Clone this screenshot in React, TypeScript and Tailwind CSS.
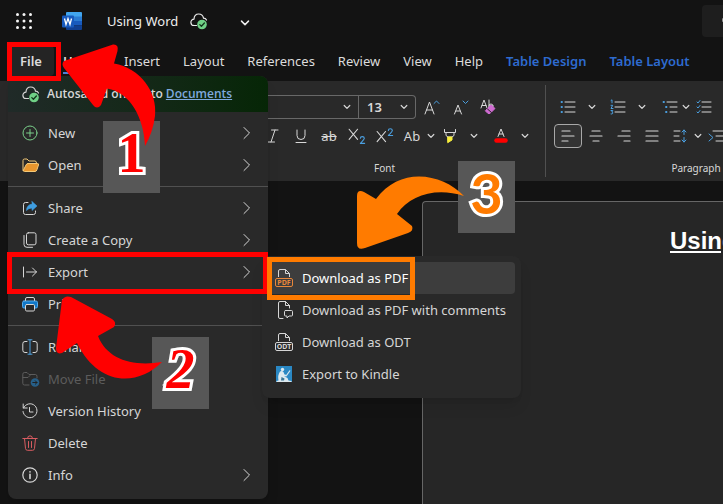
import type { ReactNode } from "react";

type IconProps = { children: ReactNode; className?: string; box?: string };

function Icon({ children, className = "size-4", box = "0 0 16 16" }: IconProps) {
  return (
    <svg
      viewBox={box}
      className={`shrink-0 ${className}`}
      fill="none"
      stroke="currentColor"
      strokeWidth="1"
      strokeLinecap="round"
      strokeLinejoin="round"
      aria-hidden="true"
    >
      {children}
    </svg>
  );
}

const ChevronDown = ({ className = "size-2" }: { className?: string }) => (
  <Icon box="0 0 8 8" className={className}>
    <path d="M1.2 2.5 4 5.3 6.8 2.5" strokeWidth="1.2" />
  </Icon>
);

const ChevronRight = () => (
  <Icon box="0 0 8 14" className="h-3.5 w-2">
    <path d="M1 1.500 6.500 7 1 12.500" />
  </Icon>
);

const CloudSaved = ({ className = "size-[18px]" }: { className?: string }) => (
  <Icon box="0 0 18 18" className={className}>
    <path d="M6.5 13.5H4.2A3.2 3.2 0 0 1 4 7.1C4.1 4.2 6 2 8.7 2c2.5 0 4.400 1.700 4.800 4.200 1.300 0 2.500.8 3 1.800" strokeWidth="1.2" />
    <circle cx="12" cy="12.500" r="4.800" fill="#6fd086" stroke="none" />
    <path d="m9.800 12.600 1.600 1.600 3-3.200" stroke="#13351c" strokeWidth="1.300" />
  </Icon>
);

const icons: Record<string, ReactNode> = {
  New: (
    <Icon className="size-4 text-[#7bd08b]">
      <circle cx="8" cy="8" r="7" />
      <path d="M8 4.500v7M4.500 8h7" />
    </Icon>
  ),
  Open: (
    <Icon className="h-4 w-[18px] text-[#f3c878]" box="0 0 18 16">
      <path d="M1 13.500V3.500Q1 2 2.500 2H5l2 2h6q1.500 0 1.500 2" />
      <path d="M6 6.500h9.500Q17 6.500 16.500 8L15 12.500Q14.500 14.500 13 14.500H2.500Q1 14.500 1.500 13L4 8Q4.500 6.500 6 6.500Z" fill="#e8962e" />
    </Icon>
  ),
  Share: (
    <Icon>
      <path d="M6 2.500H3.500Q1.500 2.500 1.500 4.500v8q0 2 2 2h8q2 0 2-2V11" />
      <path d="M10 1.500 15 6l-5 4.500V8Q6.500 8 4.500 10.500 4.500 5 10 4Z" fill="#3f9ee0" stroke="#3f9ee0" strokeWidth=".6" />
    </Icon>
  ),
  "Create a Copy": (
    <Icon>
      <rect x="4.500" y=".8" width="9.500" height="12" rx="1.800" />
      <path d="M2 3.500V12.500Q2 15.300 5 15.300h5.500" />
    </Icon>
  ),
  Export: (
    <Icon>
      <path d="M1.500 3v10M4.500 8h10M10.500 4l4 4-4 4" />
    </Icon>
  ),
  Print: (
    <Icon>
      <rect x=".5" y="5" width="15" height="7" rx="1.500" fill="#1178c8" stroke="#55a9e8" />
      <path d="M3.500 4.500V3Q3.500 1.500 5 1.500h6q1.500 0 1.500 1.500v1.500" />
      <rect x="3.500" y="8.500" width="9" height="6.500" rx="1.200" fill="#292929" />
    </Icon>
  ),
  Rename: (
    <Icon>
      <path d="M5 2.500H3Q.8 2.500.8 4.800v6.400Q.8 13.500 3 13.500h2M11 2.500h2q2.200 0 2.200 2.300v6.400q0 2.300-2.200 2.300h-2" />
      <path d="M8 .8v14.400M6 .8h4M6 15.200h4" stroke="#4ba0e1" />
    </Icon>
  ),
  "Move File": (
    <Icon className="h-4 w-[18px]" box="0 0 18 16">
      <path d="M7 14H2.500Q.8 14 .8 12.300V3.200Q.8 1.500 2.500 1.500H5l2 2h6.500q1.500 0 1.500 2V7M1 6.500h5l2-2" />
      <circle cx="13" cy="11.500" r="4.300" fill="#275f88" stroke="none" />
      <path d="M10.800 11.500h4.200M13.300 9.800l1.700 1.700-1.700 1.700" stroke="#202020" />
    </Icon>
  ),
  "Version History": (
    <Icon>
      <path d="M1.200 1v4h4M1.500 5A7 7 0 1 1 1 8.500M7.500 4.500V9H11" />
    </Icon>
  ),
  Delete: (
    <Icon className="size-4 text-[#d85c61]">
      <path d="M.8 3.500h14.400M5.500 3.500Q5.500.8 8 .8t2.500 2.700M2.500 3.500 3.500 13.500Q3.700 15.300 5.500 15.300h5q1.800 0 2-1.800l1-10M6.500 6.500v6M9.500 6.500v6" />
    </Icon>
  ),
  Info: (
    <Icon>
      <circle cx="8" cy="8" r="7.200" strokeWidth="1.200" />
      <path d="M8 7.300V11.500M8 4.700v.3" strokeWidth="1.600" />
    </Icon>
  ),
};

function MenuItem({ label, more, disabled }: { label: string; more?: boolean; disabled?: boolean }) {
  return (
    <button
      type="button"
      role="menuitem"
      disabled={disabled}
      className="flex h-8 w-full items-center pr-[17px] pl-3.5 text-left text-[#d6d6d6] disabled:text-[#5c5c5c]"
    >
      <span className="flex w-[26px] shrink-0">{icons[label]}</span>
      <span className="flex-1">{label}</span>
      {more && <ChevronRight />}
    </button>
  );
}

const Divider = () => <div role="separator" className="my-[5px] h-px bg-[#505050]" />;

function FileMenu() {
  return (
    <div role="menu" aria-label="File" className="absolute top-[76px] left-2 w-[260px] overflow-hidden rounded-lg bg-[#292929] pb-2 shadow-lg">
      <div className="mb-[5px] flex h-9 items-center bg-linear-to-r from-[#202a28] to-[#062606] pl-3.5 font-['Open_Sans','Noto_Sans',sans-serif] text-[12px] font-semibold text-[#d6d6d6]">
        <span className="flex w-[25px] shrink-0"><CloudSaved /></span>
        <p className="whitespace-nowrap">
          Autosaved online to{" "}
          <a href="#documents" className="text-[#7fa9dd] underline">Documents</a>
        </p>
      </div>
      <MenuItem label="New" more />
      <MenuItem label="Open" more />
      <Divider />
      <MenuItem label="Share" more />
      <MenuItem label="Create a Copy" more />
      <MenuItem label="Export" more />
      <MenuItem label="Print" />
      <Divider />
      <MenuItem label="Rename" />
      <MenuItem label="Move File" disabled />
      <MenuItem label="Version History" />
      <MenuItem label="Delete" />
      <MenuItem label="Info" more />
    </div>
  );
}

function FileType({ name, tone }: { name: string; tone: string }) {
  return (
    <svg viewBox="0 0 18 18" className="size-[18px]" fill="none" stroke="#d6d6d6" aria-hidden="true">
      <path d="M3.500 8V2Q3.500.5 5 .5h5.500l4 4V8M10.500.5v4h4" />
      <rect x=".5" y="9.500" width="17" height="8" rx="1.500" stroke={tone} />
      <text x="9" y="16" textAnchor="middle" fontSize="7" fontWeight="700" fill={tone} stroke="none">{name}</text>
    </svg>
  );
}

function ExportItem({ label, icon, active }: { label: string; icon: ReactNode; active?: boolean }) {
  return (
    <button
      type="button"
      role="menuitem"
      className={`flex h-8 w-full items-center rounded pl-[7px] text-left whitespace-nowrap ${active ? "bg-[#3d3d3d] text-white" : ""}`}
    >
      <span className="w-[27px] shrink-0">{icon}</span>
      {label}
    </button>
  );
}

function ExportMenu() {
  return (
    <div role="menu" aria-label="Export" className="absolute top-64 left-[262px] w-[259px] rounded-lg bg-[#292929] px-1.5 pt-1.5 pb-2 text-[#d6d6d6] shadow-lg">
      <ExportItem active label="Download as PDF" icon={<FileType name="PDF" tone="#e8873a" />} />
      <ExportItem
        label="Download as PDF with comments"
        icon={
          <Icon box="0 0 18 18" className="size-[18px]">
            <path d="M8 17.500H5Q3.500 17.500 3.500 16V2Q3.500.5 5 .5h5.500l4 4V7M10.500.5v4h4" />
            <path d="M10.500 9.500h6q1 0 1 1v3.500q0 1-1 1h-2.500l-2 2v-2h-1.500q-1 0-1-1v-3.500q0-1 1-1Z" />
          </Icon>
        }
      />
      <ExportItem label="Download as ODT" icon={<FileType name="ODT" tone="#d6d6d6" />} />
      <ExportItem
        label="Export to Kindle"
        icon={
          <svg viewBox="0 0 18 18" className="size-[18px]" aria-hidden="true">
            <path d="M1 1h16v16H1z" fill="#2a88c4" />
            <circle cx="7.500" cy="4.500" r="1.700" fill="#dce9ef" />
            <path d="M5 6.500Q7 5.500 8.500 7l1 2.500 2.500.5-.5 1.500-2.500-.2 3.500 1.700 1 2.500 3 .5V17H1.500v-1l2-.5Q2.500 10 5 6.500Z" fill="#dce9ef" />
            <path d="m15 5.500-3.500 5" stroke="#dce9ef" strokeWidth="1.200" />
            <path d="m6.500 12 3 1.500-.5 2H6Z" fill="#3b7696" />
          </svg>
        }
      />
    </div>
  );
}

function Header() {
  return (
    <header className="flex h-[42px] items-center pl-4 text-[#ededed]">
      <button type="button" aria-label="App launcher" className="w-[46px]">
        <svg viewBox="0 0 16 16" className="size-4" fill="#f5f5f5" aria-hidden="true">
          {[1.500, 8, 14.500].map((y) => [1.500, 8, 14.500].map((x) => <circle key={`${x}-${y}`} cx={x} cy={y} r="1.500" />))}
        </svg>
      </button>
      <svg viewBox="0 0 20 18" className="h-[18px] w-5" aria-label="Word" role="img">
        <path d="M5 0h14q1 0 1 1v4H4V1q0-1 1-1Z" fill="#41a5ee" />
        <path d="M4 4.500h16V9H4Z" fill="#2b7cd3" />
        <path d="M4 9h16v4.500H4Z" fill="#185abd" />
        <path d="M4 13.500h16V17q0 1-1 1H5q-1 0-1-1Z" fill="#103f91" />
        <rect y="3.500" width="12" height="12" rx="1" fill="#185abd" />
        <path d="m2.500 6.500 1.500 6 2-6 2 6 1.500-6" fill="none" stroke="#fff" strokeWidth="1.300" />
      </svg>
      <h1 className="ml-[25px] text-[13px]">Using Word</h1>
      <span className="ml-3"><CloudSaved /></span>
      <button type="button" aria-label="Document options" className="ml-8 pt-1">
        <ChevronDown className="size-2.5" />
      </button>
      <button type="button" aria-label="Search" className="ml-auto flex h-8 w-[21px] items-center justify-end overflow-hidden rounded-l-sm bg-[#1e1e1e]">
        <Icon className="-mr-3 size-3.5"><circle cx="7" cy="7" r="5" /><path d="m11 11 4 4" /></Icon>
      </button>
    </header>
  );
}

function Tabs() {
  return (
    <nav aria-label="Ribbon tabs" className="flex h-[39px] items-center gap-[23px] pb-0.5 pl-2 text-[13px] whitespace-nowrap text-[#dcdcdc]">
      <button type="button" className="-mr-3.5 h-[30px] rounded bg-[#242424] px-3 font-semibold">File</button>
      <button type="button" className="w-[42px] text-left font-semibold">
        <span className="border-b-2 border-[#4b7fd8] pb-0.5">Home</span>
      </button>
      <button type="button" className="-ml-1">Insert</button>
      <button type="button">Layout</button>
      <button type="button">References</button>
      <button type="button">Review</button>
      <button type="button">View</button>
      <button type="button">Help</button>
      <button type="button" className="font-semibold text-[#2e6bd0]">Table Design</button>
      <button type="button" className="font-semibold text-[#2e6bd0]">Table Layout</button>
    </nav>
  );
}

function Tool({ label, w = "w-7", className = "", children }: { label: string; w?: string; className?: string; children: ReactNode }) {
  return (
    <button type="button" aria-label={label} className={`flex h-6 shrink-0 items-center justify-center ${w} ${className}`}>
      {children}
    </button>
  );
}

const Lines = ({ rows }: { rows: string }) => (
  <Icon className="h-3 w-3.5" box="0 0 14 12"><path d={rows} strokeWidth="1.200" /></Icon>
);

function Ribbon() {
  return (
    <section aria-label="Ribbon" className="flex h-[100px] overflow-hidden bg-[#292929] text-[#d8d8d8]">
      <div className="ml-[231px] flex w-[307px] shrink-0 flex-col pt-3.5">
        <div className="flex h-6 items-center">
          <input aria-label="Font name" className="h-6 w-32 border border-[#686868] bg-transparent" />
          <span className="-ml-4 w-4"><ChevronDown /></span>
          <label className="flex items-center">
            <select aria-label="Font size" className="h-6 w-[57px] appearance-none rounded-r border border-l-0 border-[#686868] bg-transparent pl-2 text-[13px] font-semibold">
              <option>13</option>
            </select>
            <span className="pointer-events-none -ml-4 w-4"><ChevronDown /></span>
          </label>
          <Tool label="Grow font" w="w-8">
            <Icon><path d="m1 15 4.500-12L10 15M2.500 11h6" /><path d="M10 4.500 12.500 2 15 4.500" stroke="#4ba0e1" /></Icon>
          </Tool>
          <Tool label="Shrink font" w="w-[26px]">
            <Icon><path d="m1.500 15 3.500-9 3.500 9M3 12h4" /><path d="M10 2 12.500 4.500 15 2" stroke="#4ba0e1" /></Icon>
          </Tool>
          <Tool label="Clear formatting">
            <Icon>
              <path d="m1 9 3-8 3 8M2 6.500h4M9 1v8" />
              <circle cx="11" cy="7" r="2" />
              <path d="m6 11 5-5 4 3.500-5 5H8L5.500 12Z" fill="#cf6bd1" stroke="#cf6bd1" />
              <path d="m7.500 10 4 3.500" stroke="#292929" />
            </Icon>
          </Tool>
        </div>
        <div className="mt-[5px] flex h-6 items-center">
          <Tool label="Bold"><b>B</b></Tool>
          <Tool label="Italic"><Icon><path d="M6.500 2H13M3 14h6.500M10 2 6 14" /></Icon></Tool>
          <Tool label="Underline"><Icon><path d="M4 2v5.500a4 4 0 0 0 8 0V2M3 14.500h10" /></Icon></Tool>
          <Tool label="Strikethrough">
            <span className="text-[13px] line-through">ab</span>
          </Tool>
          <Tool label="Subscript">
            <Icon className="size-[18px]"><path d="m1 2 7.500 9M8.500 2 1 11" /><path d="M11 10q0-1.500 1.700-1.500t1.800 1.500q0 1-3.500 4.500h3.800" stroke="#4ba0e1" /></Icon>
          </Tool>
          <Tool label="Superscript">
            <Icon className="size-[18px]"><path d="m1 4 7.500 9M8.500 4 1 13" /><path d="M11 3q0-1.500 1.700-1.500T14.500 3q0 1-3.500 4.500h3.800" stroke="#4ba0e1" /></Icon>
          </Tool>
          <Tool label="Change case" w="w-[26px]"><span className="text-[13px]">Ab</span></Tool>
          <Tool label="Case options" w="w-3"><ChevronDown /></Tool>
          <Tool label="Highlight" w="w-[26px]">
            <Icon><path d="M2.500 1.500v3h11v-3M4 4.500v3L6 9h4l2-1.500v-3" /><path d="M6 9h4v3l-4 2.500Z" fill="#f7ee3c" stroke="#f7ee3c" /></Icon>
          </Tool>
          <Tool label="Highlight colors" w="w-[22px]"><ChevronDown /></Tool>
          <Tool label="Font color" w="w-8">
            <Icon><path d="m5 8.500 3-7.500 3 7.500M6 6h4" /><path d="M3.500 12.500h9" stroke="#ff0000" strokeWidth="4.500" /></Icon>
          </Tool>
          <Tool label="Font colors" w="w-4"><ChevronDown /></Tool>
        </div>
        <p className="mt-2.5 text-center text-[10px] leading-5">Font</p>
      </div>
      <div className="my-1 mr-2 ml-[7px] w-px shrink-0 bg-[#505050]" />
      <div className="flex w-[284px] shrink-0 flex-col pt-3.5">
        <div className="flex h-6 items-center">
          <Tool label="Bullets"><Icon><path d="M5 3h10M5 8h10M5 13h10" /><path d="M1.500 3h.5M1.500 8h.5M1.500 13h.5" stroke="#4ba0e1" strokeWidth="1.800" /></Icon></Tool>
          <Tool label="Bullet styles" w="w-5"><ChevronDown /></Tool>
          <Tool label="Numbering" w="w-8">
            <Icon>
              <path d="M5 3h10M5 8h10M5 13h10" />
              <path d="m1 1.500 1-.7v3M1 6.300h1.700L1 9.500h2M1 11.500h1.800L1.800 13q1.200 0 1 1.200T1 15" stroke="#4ba0e1" />
            </Icon>
          </Tool>
          <Tool label="Number styles" w="w-4"><ChevronDown /></Tool>
          <Tool label="Multilevel list" w="w-6" className="ml-2"><Icon><path d="M5 3h10M8 8h7M8 13h7" /><path d="M1.500 3h.5M4 8h.5M4 13h.5" stroke="#4ba0e1" strokeWidth="1.800" /></Icon></Tool>
          <Tool label="Multilevel styles" w="w-2"><ChevronDown /></Tool>
          <Tool label="Checklist"><Icon><path d="M6 3h9M6 8h9M6 13h9" /><path d="m1 3 1 1 2-2.500M1 8l1 1 2-2.500M1 13l1 1 2-2.500" stroke="#4ba0e1" /></Icon></Tool>
        </div>
        <div className="mt-[5px] flex h-6 items-center">
          <Tool label="Align left" className="rounded border border-[#a8a8a8] bg-[#333]"><Lines rows="M1 1h8M1 6h12M1 11h6" /></Tool>
          <Tool label="Center"><Lines rows="M3 1h8M1 6h12M4 11h6" /></Tool>
          <Tool label="Align right"><Lines rows="M5 1h8M1 6h12M7 11h6" /></Tool>
          <Tool label="Justify"><Lines rows="M1 1h12M1 6h12M1 11h12" /></Tool>
          <Tool label="Line spacing"><Icon><path d="M2 3h6M2 8h5M2 13h6" /><path d="M12 2v4.500M12 9.500V14M10 4l2-2 2 2M10 12l2 2 2-2" stroke="#4ba0e1" /></Icon></Tool>
          <Tool label="Spacing options" w="w-2"><ChevronDown /></Tool>
          <Tool label="Increase indent"><Icon><path d="M5 3h10M8 8h7M8 13h7" /><path d="m1 6 4 3.500L1 13" stroke="#4ba0e1" /></Icon></Tool>
        </div>
        <p className="mt-2.5 text-center text-[10px] leading-5">Paragraph</p>
      </div>
    </section>
  );
}

function Annotations() {
  const digit = "absolute flex h-[72px] w-[57px] items-center justify-center bg-[#575757] pb-2 font-bold leading-none [-webkit-text-stroke:6px_white] [paint-order:stroke_fill]";
  return (
    <>
      <div className="absolute top-[42px] left-[7px] h-[39px] w-[54px] border-5 border-[#ff0000]" />
      <div className="absolute top-[252px] left-[7px] h-[42px] w-[261px] border-5 border-[#ff0000]" />
      <div className="absolute top-[257px] left-[267px] h-[43px] w-[148px] border-5 border-[#ff7b00]" />
      <span className={`${digit} top-[121px] left-[103px] font-['Liberation_Serif',serif] text-[56px] text-[#ff0000]`}>1</span>
      <span className={`${digit} top-[337px] left-[152px] font-['Liberation_Serif',serif] text-[56px] text-[#ff0000] italic`}>2</span>
      <span className={`${digit} top-[161px] left-[458px] font-['Lato',sans-serif] text-[56px] text-[#ff7b00]`}>3</span>
      <svg viewBox="0 0 480 400" className="pointer-events-none absolute top-0 left-0 h-[400px] w-[480px]" aria-hidden="true">
        <path d="M64 61 113 44.500Q119 44 117.500 51L114 63.500C140 68 158 92 155 116Q153 132 145 146C144 118 130 92 107 88.500L101 105Q97 110 93 105L64 68Q61 64 64 61Z" fill="#ff0000" />
        <path d="M62 300Q65 295 71 297L112 319Q117 322 114 327L98 336C107 359 132 367 162 362C137 387 98 386 77 343L62 353Q56 355 56 348Z" fill="#ff0000" />
        <path d="M357 196Q357 189 364 192L376 199C400 166 442 173 464 196C436 187 410 195 397 214L412 226Q414 231 408 233L365 248Q357 251 357 243Z" fill="#ff7b00" />
      </svg>
    </>
  );
}

export default function App() {
  return (
    <div className="relative flex min-h-screen flex-col overflow-hidden bg-[#131313] font-['Noto_Sans','Open_Sans',sans-serif] text-[13px] leading-5">
      <Header />
      <Tabs />
      <Ribbon />
      <main className="mt-5 ml-[422px] flex-1 overflow-hidden rounded-tl border-t border-l border-[#666] bg-[#262626] pt-[23px] pl-[247px]">
        <h2 className="font-['Liberation_Sans',sans-serif] text-[24px] leading-8 font-bold whitespace-nowrap text-white underline">Using Word</h2>
      </main>
      <FileMenu />
      <ExportMenu />
      <Annotations />
    </div>
  );
}
